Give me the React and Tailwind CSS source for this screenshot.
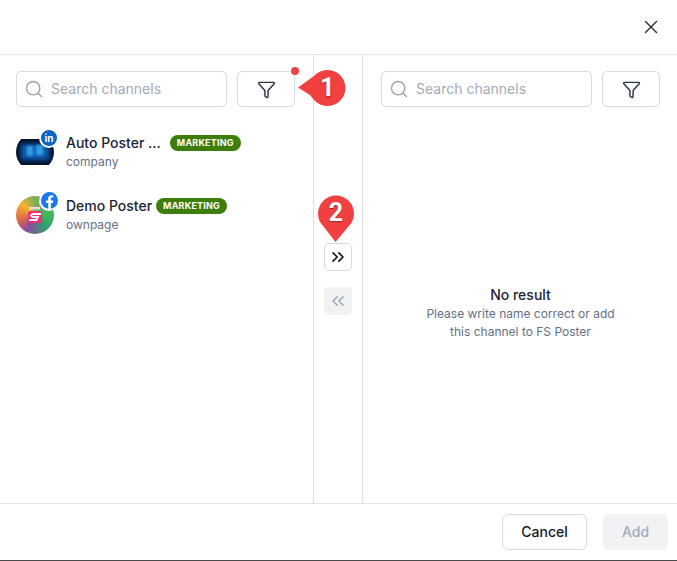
import React from 'react'
import { Search, Funnel, ChevronsRight, ChevronsLeft, X } from 'lucide-react'

const SearchRow = () => (
    <div className="flex gap-[10px]">
        <div className="w-[211px] h-9 flex items-center gap-[7px] border border-[#d5d9e0] rounded-[5px] pl-[7px] bg-white">
            <Search size={20} strokeWidth={1.7} className="text-[#98a2b3]" />
            <span className="text-sm text-[#a3abb8]">Search channels</span>
        </div>
        <button className="w-[58px] h-9 flex items-center justify-center border border-[#d5d9e0] rounded-[5px] bg-white">
            <Funnel size={19} strokeWidth={1.8} className="text-[#2b3445]" />
        </button>
    </div>
)

const Badge = () => (
    <span className="h-4 px-[7px] flex items-center rounded-full bg-[#3d7d0a] text-white text-[9px] font-bold tracking-[0.2px]">MARKETING</span>
)

const LinkedinAvatar = () => (
    <div className="relative w-[38px] h-[38px]">
        <div className="absolute left-0 top-[6px] w-[38px] h-[26px] overflow-hidden">
            <div className="absolute left-0 -top-[6px] w-[38px] h-[38px] rounded-full bg-[#04142f]">
                <div className="absolute left-[5px] top-[11px] w-[28px] h-[16px] bg-[#0f5ab0] blur-[2px]"></div>
                <div className="absolute left-[11px] top-[13px] w-[6px] h-[10px] bg-[#2f9ee6] blur-[1px]"></div>
                <div className="absolute left-[20px] top-[12px] w-[7px] h-[10px] bg-[#2f9ee6] blur-[1px]"></div>
            </div>
        </div>
        <div className="absolute -right-[5px] -top-[5px] w-[20px] h-[20px] rounded-full bg-[#0a66c2] border-2 border-white flex items-center justify-center text-white text-[10px] font-bold leading-none">in</div>
    </div>
)

const FacebookAvatar = () => (
    <div className="relative w-[38px] h-[38px]">
        <div className="w-[38px] h-[38px] rounded-full bg-[conic-gradient(from_0deg,#7fae5a_0deg,#3fb85c_90deg,#2f9e70_140deg,#8e4a9e_210deg,#d9694a_250deg,#f5b22e_310deg,#7fae5a_360deg)] flex items-center justify-center">
            <svg width="22" height="22" viewBox="0 0 22 22">
                <rect x="5" y="3" width="11" height="2.5" fill="#f4d9e4" />
                <rect x="4" y="7" width="14" height="12" rx="2" fill="#ee2f78" />
                <path d="M17 10H8.5L7 11.5 8.5 13H14l-1.5 3H5" fill="none" stroke="#fff" strokeWidth="1.8" />
            </svg>
        </div>
        <div className="absolute -right-[5px] -top-[5px] w-[20px] h-[20px] rounded-full bg-white flex items-center justify-center">
            <svg width="17" height="17" viewBox="0 0 24 24">
                <circle cx="12" cy="12" r="12" fill="#1877f2" />
                <path d="M16.7 15.5l.5-3.5h-3.3V9.8c0-1 .5-1.9 2-1.9h1.5v-3s-1.4-.2-2.7-.2c-2.7 0-4.5 1.6-4.5 4.6V12H7v3.5h3.2V24h3.7v-8.5z" fill="#fff" />
            </svg>
        </div>
    </div>
)

const Channel = ({ avatar, name, type, gap }) => (
    <div className="flex items-center h-[63px] gap-3">
        {avatar}
        <div className="flex flex-col">
            <div className={`flex items-center ${gap}`}>
                <span className="text-sm leading-[20px] font-[450] text-[#1c2433]">{name}</span>
                <Badge />
            </div>
            <span className="text-xs leading-[18px] text-[#667085]">{type}</span>
        </div>
    </div>
)

const Pin = ({ number }) => (
    <span className="text-white text-[25px] font-bold leading-none font-['Roboto',sans-serif] [text-shadow:0_1px_1px_rgba(0,0,0,0.4)]">{number}</span>
)

export default function App() {
    return (
        <div className="relative w-[677px] h-[561px] bg-white flex flex-col border-b border-[#4a4a4a] font-['Inter',sans-serif] overflow-hidden">
            <div className="h-[55px] shrink-0 border-b border-[#e2e4e9] flex items-center justify-end pr-[15px]">
                <X size={22} strokeWidth={1.5} className="text-[#2b2b2b]" />
            </div>

            <div className="flex-1 flex min-h-0">
                <div className="relative w-[314px] shrink-0 border-r border-[#dcdfe5] pl-4 pt-4">
                    <SearchRow />
                    <div className="mt-[13px]">
                        <Channel avatar={<LinkedinAvatar />} name="Auto Poster ..." type="company" gap="gap-[9px]" />
                        <Channel avatar={<FacebookAvatar />} name="Demo Poster" type="ownpage" gap="gap-1" />
                    </div>
                    <span className="absolute left-[291px] top-[12px] w-[8px] h-[8px] rounded-full bg-[#f04444]"></span>
                </div>

                <div className="relative w-[49px] shrink-0 border-r border-[#dcdfe5] flex flex-col items-center pt-[188px] gap-[16px]">
                    <button className="w-7 h-7 flex items-center justify-center border border-[#d5d9e0] rounded-[5px] bg-white">
                        <ChevronsRight size={20} strokeWidth={2} className="text-[#14181f]" />
                    </button>
                    <button className="w-7 h-7 flex items-center justify-center rounded-[5px] bg-[#f1f2f4]">
                        <ChevronsLeft size={20} strokeWidth={2} className="text-[#a3abb8]" />
                    </button>
                </div>

                <div className="flex-1 flex flex-col pl-[18px] pt-4">
                    <SearchRow />
                    <div className="flex flex-col items-center w-[279px] mt-[178px]">
                        <span className="text-sm leading-[20px] font-[450] text-[#1c2433]">No result</span>
                        <span className="text-xs leading-[18px] text-[#667085] text-center">Please write name correct or add<br />this channel to FS Poster</span>
                    </div>
                </div>
            </div>

            <div className="h-[57px] shrink-0 border-t border-[#e2e4e9] flex items-center justify-end gap-4 pr-[9px]">
                <button className="w-[85px] h-9 border border-[#d5d9e0] rounded-[6px] bg-white text-sm font-[450] text-[#14181f]">Cancel</button>
                <button className="w-[65px] h-9 rounded-[6px] bg-[#f1f2f4] text-sm font-[450] text-[#a3abb8]">Add</button>
            </div>

            {/* tutorial markers sit over the modal */}
            <div className="absolute left-[298px] top-[69px] w-[48px] h-[38px] flex items-center justify-center pl-[11px]">
                <svg className="absolute inset-0" width="48" height="38" viewBox="0 0 48 38">
                    <path d="M0 18.5 L16 7 A18 18 0 1 1 16 31 L12 26 Z" fill="#f04040" />
                </svg>
                <span className="relative"><Pin number="1" /></span>
            </div>
            <div className="absolute left-[317px] top-[195px] w-[38px] h-[48px] flex justify-center pt-[5px]">
                <svg className="absolute inset-0" width="38" height="48" viewBox="0 0 38 48">
                    <path d="M18.5 47 L7 32 A18 18 0 1 1 31 32 Z" fill="#f04040" />
                </svg>
                <span className="relative"><Pin number="2" /></span>
            </div>
        </div>
    )
}
